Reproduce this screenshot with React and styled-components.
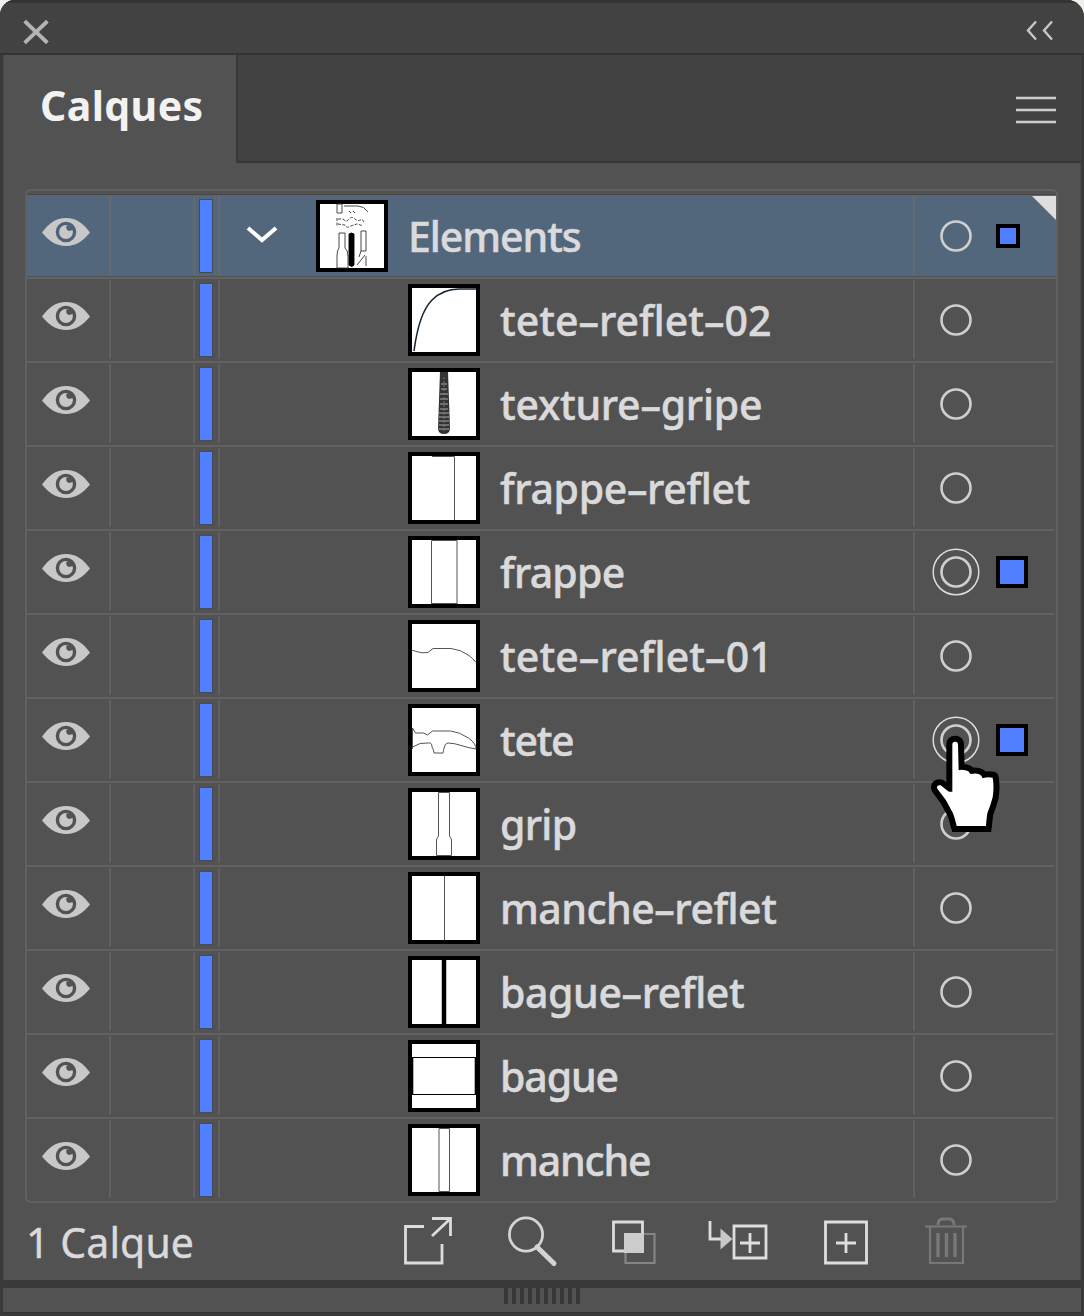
import React from "react";
import styled, { createGlobalStyle } from "styled-components";

const Global = createGlobalStyle`
  html, body { margin: 0; padding: 0; background: #eef0ec; }
  * { box-sizing: border-box; }
  svg { display: block; flex: none; overflow: visible; }
`;

const Panel = styled.main`
  display: flex;
  flex-direction: column;
  width: 1084px;
  height: 1316px;
  padding: 0 3px 3px 3px;
  overflow: hidden;
  border-radius: 15px 17px 0 0;
  background: #3a3a3a;
  font-family: "Noto Sans", "Open Sans", sans-serif;
  color: #dadadc;
`;

const TitleBar = styled.header`
  display: flex;
  flex: none;
  justify-content: space-between;
  align-items: flex-start;
  height: 55px;
  margin: 0 -3px;
  padding: 17px 31px 0 24px;
  border-top: 3px solid #333;
  border-bottom: 2px solid #333;
  background: #424242;
`;

const TabStrip = styled.div`
  display: flex;
  flex: none;
  height: 108px;
  background: #525252;
`;

const Tab = styled.div`
  width: 233px;
  padding-left: 36px;
  border-left: 1px solid #4a4a4a;
  font-size: 41px;
  font-weight: 700;
  line-height: 100px;
  letter-spacing: ${(p) => p.$track}px;
  color: #f2f2f3;
`;

const StripRest = styled.div`
  display: flex;
  flex: 1;
  justify-content: flex-end;
  padding: 41px 25px 0 0;
  border-left: 2px solid #363636;
  border-bottom: 2px solid #363636;
  background: #424242;
`;

const Body = styled.section`
  display: flex;
  flex: none;
  flex-direction: column;
  height: 1117px;
  padding: 26px 22px 0 22px;
  border-left: 1px solid #484848;
  border-right: 1px solid #484848;
  background: #525252;
`;

const List = styled.div`
  flex: none;
  width: 1033px;
  height: 1014px;
  margin-left: -1px;
  padding-top: 3px;
  border: 2px solid #606060;
  border-radius: 6px;
`;

const Row = styled.div`
  position: relative;
  display: flex;
  height: ${(p) => (p.$last ? 82 : 84)}px;
  padding: 2px 0 ${(p) => (p.$last ? 2 : 3)}px;
  background: ${(p) =>
    p.$selected
      ? "linear-gradient(#484644, #484644) 0 0 / 100% 1px no-repeat, linear-gradient(#52667c, #52667c) 0 0 / 100% 82px no-repeat"
      : "transparent"};
  &::after {
    content: "";
    position: absolute;
    left: 0;
    right: ${(p) => (p.$selected ? 0 : 2)}px;
    bottom: -1px;
    height: 2px;
    background: ${(p) => (p.$last ? "transparent" : "#626262")};
  }
`;

const Cell = styled.div`
  display: flex;
  flex: none;
  align-items: flex-start;
  width: ${(p) => p.$w}px;
  border-right: 2px solid ${(p) => (p.$selected ? "#666a6d" : "#606060")};
`;

const EyeCell = styled(Cell)`
  padding: 22px 0 0 15px;
`;

const StripCell = styled(Cell)`
  margin-left: 1px;
  padding: 4px 0 0 4px;
`;

const Swatch = styled.span`
  width: 12px;
  height: 72px;
  background: #5080ff;
  outline: 1px solid #464a52;
`;

const NameCell = styled.div`
  display: flex;
  flex: 1;
  align-items: flex-start;
  padding: 4px 0 0 ${(p) => (p.$child ? 188 : 27)}px;
  border-right: 2px solid ${(p) => (p.$selected ? "#666a6d" : "#606060")};
`;

const Twirl = styled.svg`
  margin: 27px 39px 0 0;
`;

const Thumb = styled.svg`
  width: 72px;
  height: 72px;
  border: 4px solid #000;
  background: #fff;
`;

const Label = styled.span`
  margin: -6px 0 0 20px;
  font-size: 41px;
  font-weight: 500;
  line-height: 84px;
  height: 84px;
  white-space: nowrap;
  letter-spacing: ${(p) => p.$track}px;
  -webkit-text-stroke: 0.5px currentColor;
`;

const TargetCell = styled.div`
  position: relative;
  display: flex;
  flex: none;
  align-items: center;
  width: 141px;
  height: 80px;
  padding-left: 17px;
`;

const SelectionBox = styled.span`
  width: ${(p) => p.$size}px;
  height: ${(p) => p.$size}px;
  margin-left: 16px;
  border: 4px solid #000;
  background: #5080ff;
`;

const Corner = styled.span`
  position: absolute;
  top: 0;
  right: 0;
  width: 24px;
  height: 24px;
  background: #dedede;
  clip-path: polygon(0 0, 100% 0, 100% 100%);
`;

const Cursor = styled.svg`
  position: absolute;
  z-index: 2;
  left: 15px;
  top: 34px;
`;

const Footer = styled.footer`
  display: flex;
  align-items: flex-start;
  height: 78px;
  margin-top: -1px;
`;

const Count = styled.span`
  width: 378px;
  font-size: 41px;
  font-weight: 400;
  line-height: 81px;
  letter-spacing: ${(p) => p.$track}px;
  -webkit-text-stroke: 0.4px currentColor;
`;

const Tools = styled.div`
  display: flex;
  align-items: flex-start;
  padding-top: 15px;
`;

const Tool = styled.svg`
  margin-left: ${(p) => p.$gap}px;
`;

const GripBar = styled.div`
  display: flex;
  flex: none;
  justify-content: center;
  gap: 4px;
  height: 33px;
  border-top: 8px solid #393939;
  background: #525252;
  border-bottom: 1px solid #333;
`;

const Notch = styled.span`
  width: 4px;
  height: 16px;
  background: #373737;
`;

const Eye = ({ pupil }) => (
  <svg width="48" height="28" viewBox="0 0 48 28">
    <path d="M0 14.5C7 5 14 0 24 0s17 5 24 14.5C41 23 34 28 24 28S7 23 0 14.5Z" fill="#c8c8c9" />
    <circle cx="24" cy="14" r="8.6" fill="none" stroke={pupil} strokeWidth="3.4" />
    <path d="M24.500 7.500Q23.500 12 27 13L31 12V7Z" fill={pupil} />
  </svg>
);

const Target = ({ active }) => (
  <svg width="48" height="48" viewBox="-24 -24 48 48" fill="none">
    <circle r="14.5" stroke="#cfcfcf" strokeWidth="2.6" />
    {active && <circle r="22.8" stroke="#dcdcdc" strokeWidth="1.5" />}
  </svg>
);

const HandCursor = () => (
  <Cursor width="72" height="100" viewBox="92 612 216 300">
    <path
      d="M159 785V643Q159 635 167.500 635T176 643L178 721Q186 717 198 721Q208 722 214 732Q230 728 240 733Q247 736 250 745Q264 740 280 743Q285 770 280 802Q274 826 264 850Q261 870 260 888H172Q168 868 161 850L140 811L114 776Q110 764 124 766Q137 777 149 785Z"
      fill="#fff"
      stroke="#000"
      strokeWidth="36"
      strokeLinejoin="round"
      paintOrder="stroke"
    />
    <path d="M158 897h118" stroke="#000" strokeWidth="18" />
  </Cursor>
);

const drawings = {
  all: (
    <g strokeWidth="0.9" stroke="#333">
      <path d="M17 0v9h5V0ZM24 2h14q6 0 10 6M29 7l2 2m2-2l2 2" />
      <path d="M17 14v8M18 15h5q4 4 6 0q3-3 6 0q3 3 7 0l2 3M18 20l7 1q2 4 6 1q5-2 7-2l5 2" strokeDasharray="3 1.5" />
      <path d="M19 29h6v15q3 2 3 8v12H17V52q0-6 2-8ZM41 27h5v20h-5ZM41 47l-2 6M46 52v10M37 61l8-10" />
      <path d="M29 30q2-2 5 0v31q-2 3-5 0Z" fill="#000" stroke="#000" />
    </g>
  ),
  arc: <path d="M2 63Q7 25 20 12Q31 1 47 1H64" stroke="#162033" strokeWidth="1.500" />,
  texture: (
    <g stroke="none">
      <path d="M28 0h8l2 56q0 6-6 6t-6-6Z" fill="#333" />
      <path d="M29 12h6M29 17h6M28 22h8M28 27h8M28 32h8M28 37h8M27 41h10M27 45h10M27 49h10M27 53h10M27 57h10" stroke="#aaa" strokeWidth="1" />
      <path d="M32 5v55" stroke="#888" strokeWidth="0.8" strokeDasharray="2 2" />
    </g>
  ),
  frappeReflet: <path d="M20 0.500h22.500V64" />,
  frappe: <path d="M19.500 64V0.500h25.500V64M19.500 63.500H45" />,
  crest: <path d="M0 26.500q3 0 4 1q6 2 12 1l5-4h18q10 1 18 7q4 3 7 7" />,
  hammer: (
    <path d="M0.500 41V20l3 5h8l4 2l5-4h18q9 1 18 7q8 6 7.500 11q-7-1-13-3q-9-3-15-3q-3 0-4 5q-1 6-1 5H22q0-3-2-6q0-5-4-4q-8-1-15.500 4Z" />
  ),
  grip: <path d="M26.500 0.500h11V44q2 2 2 5v14.500h-15V49q0-3 2-5Z" />,
  line: <path d="M32.500 0v64" />,
  thick: <path d="M32 0v64" stroke="#000" strokeWidth="4.500" />,
  ring: (
    <g stroke="#000">
      <path d="M1 13.500H63M1 50.500H63" strokeWidth="1.200" />
      <path d="M0.500 13v38M63.500 13v38" strokeWidth="1.600" />
    </g>
  ),
  handle: <path d="M27 0.500h10.500v63H27Z" />,
};

const layers = [
  { name: "Elements", art: "all", parent: true, box: 24, track: -1.05 },
  { name: "tete–reflet–02", art: "arc", track: 0 },
  { name: "texture–gripe", art: "texture", track: -0.25 },
  { name: "frappe–reflet", art: "frappeReflet", track: -0.35 },
  { name: "frappe", art: "frappe", box: 32, active: true, track: -0.75 },
  { name: "tete–reflet–01", art: "crest", track: 0.1 },
  { name: "tete", art: "hammer", box: 32, active: true, cursor: true, track: -1.3 },
  { name: "grip", art: "grip", track: -0.7 },
  { name: "manche–reflet", art: "line", track: -0.5 },
  { name: "bague–reflet", art: "thick", track: -0.4 },
  { name: "bague", art: "ring", track: -1.1 },
  { name: "manche", art: "handle", track: -1.15 },
];

const LayerRow = ({ layer, last }) => {
  const sel = layer.parent;
  return (
    <Row $selected={sel} $last={last}>
      <EyeCell $w={84} $selected={sel}>
        <Eye pupil={sel ? "#4e6379" : "#525252"} />
      </EyeCell>
      <Cell $w={84} $selected={sel} />
      <StripCell $w={24} $selected={sel}>
        <Swatch />
      </StripCell>
      <NameCell $child={!sel} $selected={sel}>
        {sel && (
          <Twirl width="30" height="16" viewBox="0 0 30 16" fill="none">
            <path d="M1 1L15 13L29 1" stroke="#fff" strokeWidth="4" />
          </Twirl>
        )}
        <Thumb viewBox="0 0 64 64" fill="none" stroke="#555" strokeWidth="1">
          {drawings[layer.art]}
        </Thumb>
        <Label $track={layer.track}>{layer.name}</Label>
      </NameCell>
      <TargetCell>
        <Target active={layer.active} />
        {layer.box && <SelectionBox $size={layer.box} />}
        {sel && <Corner />}
        {layer.cursor && <HandCursor />}
      </TargetCell>
    </Row>
  );
};

export default function App() {
  return (
    <>
      <Global />
      <Panel>
        <TitleBar>
          <svg width="24" height="24" viewBox="0 0 24 24">
            <path d="M2 2.500L22 21.500M22 2.500L2 21.500" stroke="#b4b4b4" strokeWidth="3.800" strokeLinecap="square" />
          </svg>
          <svg width="27" height="20" viewBox="0 0 27 20" fill="none">
            <path d="M10 1.500L2 10.500l8 9M26 1.500L18 10.500l8 9" stroke="#c6c8c8" strokeWidth="2.400" />
          </svg>
        </TitleBar>
        <TabStrip>
          <Tab $track={0.4}>Calques</Tab>
          <StripRest>
            <svg width="40" height="28" viewBox="0 0 40 28">
              <path d="M0 2h40M0 14h40M0 26h40" stroke="#cdcfcf" strokeWidth="2.600" />
            </svg>
          </StripRest>
        </TabStrip>
        <Body>
          <List>
            {layers.map((layer, i) => (
              <LayerRow key={layer.name} layer={layer} last={i === layers.length - 1} />
            ))}
          </List>
          <Footer>
            <Count $track={0.1}>1 Calque</Count>
            <Tools>
              <Tool $gap={0} width="48" height="48" viewBox="0 0 48 48" fill="none" stroke="#dcdcdc" strokeWidth="2.800">
                <path d="M20 9.500H1.500v36.500h36.500V27M28 1.500h18.500V19M46 2L28 19" />
              </Tool>
              <Tool $gap={56} width="49" height="50" viewBox="0 0 49 50" fill="none" stroke="#d4d4d4">
                <circle cx="18" cy="17.500" r="16.600" strokeWidth="2.800" />
                <path d="M29 30L46 46.500" strokeWidth="5" strokeLinecap="round" />
              </Tool>
              <Tool $gap={55} width="44" height="48" viewBox="0 0 44 48" fill="none">
                <path d="M13.500 17h29v29h-29Z" stroke="#858585" strokeWidth="2.200" />
                <path d="M1.500 5h29v29h-29Z" stroke="#dcdcdc" strokeWidth="2.800" />
                <path d="M12 16h20v20H12Z" fill="#cdcdcd" />
              </Tool>
              <Tool $gap={52} width="60" height="48" viewBox="0 0 60 48" fill="none" stroke="#dedede" strokeWidth="2.800">
                <path d="M2 4v18h12" />
                <path d="M12.500 11.500v21l12-10.500Z" fill="#c8c8c8" stroke="none" />
                <path d="M26 9h32v32H26ZM42 16v20M32 26h20" />
              </Tool>
              <Tool $gap={56} width="44" height="48" viewBox="0 0 44 48" fill="none" stroke="#dedede" strokeWidth="2.800">
                <path d="M1.500 5h41v41h-41ZM22 16v20M12 26h20" />
              </Tool>
              <Tool $gap={57} width="42" height="48" viewBox="0 0 42 48" fill="none" stroke="#787878" strokeWidth="2.200">
                <path d="M0 9.500h42M5 10.500v35.500h33V10.500" />
                <path d="M13 8q0-6 5-6h6q5 0 5 6" strokeWidth="2.800" />
                <path d="M13 16v24M21.500 16v24M30 16v24" strokeWidth="3.400" />
              </Tool>
            </Tools>
          </Footer>
        </Body>
        <GripBar>
          {Array.from({ length: 10 }, (_, i) => (
            <Notch key={i} />
          ))}
        </GripBar>
      </Panel>
    </>
  );
}
